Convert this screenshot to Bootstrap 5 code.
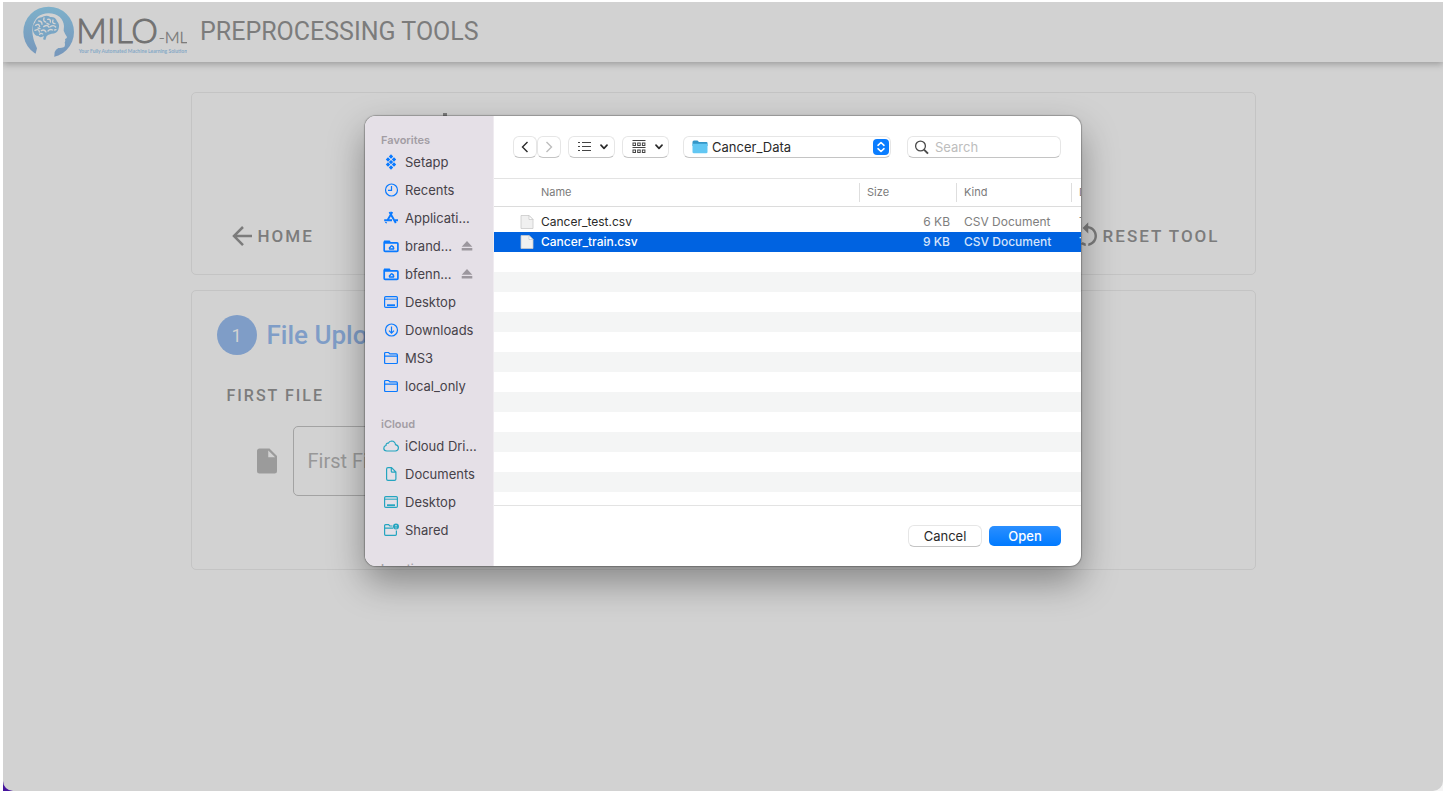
<!DOCTYPE html>
<html lang="en">
<head>
<meta charset="utf-8">
<meta name="viewport" content="width=device-width, initial-scale=1">
<title>MILO-ML Preprocessing Tools</title>
<link href="https://cdn.jsdelivr.net/npm/bootstrap@5.3.0/dist/css/bootstrap.min.css" rel="stylesheet">
<style>
  body { background:#fff; padding:2px 2px 3px 3px; font-family:Roboto,"Liberation Sans",sans-serif; color:#7c7c7c; }
  .desktop-edge { background:linear-gradient(90deg,#45139c 20px,#f4f4f4 20px); }
  .app-window { min-height:calc(100vh - 5px); background:#d2d2d2; border-radius:0 0 10px 10px; }
  .app-bar { height:60px; padding:0 20px; gap:13px; box-shadow:0 2px 7px rgba(0,0,0,.28); }
  .app-bar h1 { font-size:25px; line-height:30px; font-weight:400; }
  .page-col { max-width:1065px; padding-top:30px; gap:15px; }
  .panel { border:1px solid #c4c4c4; border-radius:5px; }
  .panel-actions { min-height:183px; padding:0 35px 23px; }
  .title-tip { width:4px; height:10px; left:251px; top:20px; background:#7c7c7c; }
  .tool-btn { border:0; background:none; padding:0; color:inherit; font-size:17px; line-height:30px; font-weight:500; letter-spacing:2px; gap:1px; }
  .panel-upload { padding:24px 25px 73px; }
  .step-row { gap:10px; }
  .step-dot { width:40px; height:40px; background:#7f9dc7; color:#d2d2d2; font-size:18px; }
  .panel-upload h2 { font-size:26px; line-height:40px; font-weight:500; color:#7f9dc7; }
  .file-label { font-size:16px; line-height:20px; font-weight:500; letter-spacing:2px; margin:31px 0 20px 10px; }
  .file-row { padding-left:35px; gap:11px; color:#9b9b9b; }
  .file-row input { width:320px; height:70px; border:1px solid #a3a3a3; border-radius:5px; background:none; padding:0 14px; font-size:20px; }
  .file-row input::placeholder { color:#989898; }

  .dialog-layer { padding-top:114px; }
  .file-dialog { width:716px; height:450px; border-radius:11px; background:#fff; font-family:Inter,"Liberation Sans",sans-serif; font-size:13px; line-height:16px; color:#2a2a2a;
    box-shadow:0 0 1px 1px rgba(0,0,0,.25),0 16px 36px rgba(0,0,0,.36); }
  .places { width:129px; background:#e5e0e7; border-right:1px solid #efebf0; color:#464249; }
  .places h3 { font-size:11px; line-height:16px; font-weight:600; color:#a29da4; margin:0; padding:16px 0 0 16px; }
  .places a { height:28px; padding:0 16px 0 18px; gap:6px; color:inherit; text-decoration:none; white-space:nowrap; }
  .places svg { flex:none; fill:none; stroke:#0a7aff; stroke-width:1.2; }
  .cloud-set svg { stroke:#25a5c0; }
  .places .eject { stroke:none; fill:#9c979e; }
  .tool-strip { height:63px; padding:0 20px 0 19px; border-bottom:1px solid #e3e3e3; }
  .view-set { gap:7px; }
  .mac-btn { height:22px; border:1px solid #e6e6e6; border-bottom-color:#c4c4c4; border-radius:6px; background:#fff; padding:0; color:#2a2a2a; }
  .nav-btn { width:24px; }
  .view-btn { width:47px; padding-left:3px; gap:9px; }
  .folder-btn { width:208px; padding:0 1px 0 8px; gap:4px; }
  .search-box { width:154px; padding:0 6px; gap:6px; }
  .search-box input { border:0; outline:0; padding:0; background:none; }
  .search-box input::placeholder { color:#bdbdbd; }
  .list-area { height:327px; border-bottom:1px solid #e3e3e3; }
  .file-table { width:800px; table-layout:fixed; border-collapse:separate; border-spacing:0; font-size:12px; }
  .file-table th { height:28px; padding:0 8px 2px; font-size:11px; font-weight:400; color:#7b7b7b; border-bottom:1px solid #dcdcdc;
    background:linear-gradient(#dedede,#dedede) no-repeat 0 4px/1px 19px; }
  .file-table th:first-child { background:none; padding-left:47px; }
  .file-table tbody::before { content:""; display:block; height:5px; }
  .file-table td { height:20px; padding:0 8px; color:#7e7e7e; white-space:nowrap; }
  .file-table td:first-child { color:#2a2a2a; padding-left:25px; }
  .file-table td.text-end { padding-right:6px; }
  .name-cell { gap:6px; }
  .file-table tbody tr:nth-child(even) td { background:#f4f5f5; }
  .file-table tbody tr.picked td { background:#0063e1; color:#d5e4fb; font-weight:500; }
  .file-table tbody tr.picked td:first-child { color:#fff; }
  .dialog-foot { padding:0 20px; gap:7px; }
  .end-btn { width:74px; }
  .open-btn { width:72px; height:20px; border:0; border-radius:5px; background:linear-gradient(#2b8fff,#007aff); color:#fff; font-weight:500; padding:0; }
</style>
</head>
<body>
<svg width="0" height="0" class="position-absolute" aria-hidden="true">
  <symbol id="folder" viewBox="0 0 16 14"><path d="M1.600 11.500v-9q0-1 1-1h3l1.300 1.400h6.500q1 0 1 1v7.600q0 1-1 1H2.600q-1 0-1-1zM1.600 5.200h12.800"/></symbol>
  <symbol id="share-folder" viewBox="0 0 16 14"><path stroke-width="1.700" d="M1.200 2.400V11.500q0 .9.900.9h11.900q.9 0 .9-.9V4.700q0-.9-.9-.9H1.200M1 2.300h5.200l1 1.500"/><path d="M6.700 10q-.9-1.300.6-1.900 1-2.200 2.300-.6 1.200.4.900 1.300.5.700 0 1.200z" stroke-width="1.400"/></symbol>
  <symbol id="desk" viewBox="0 0 16 14"><rect x="1.600" y="1.600" width="12.800" height="10.800" rx="1.200"/><path d="M2 4.200h12" stroke-width="1"/><path d="M4 10.200h8" stroke-width="1.800"/></symbol>
  <symbol id="eject" viewBox="0 0 12 10"><path d="M6 0 11.300 5.800H.7zM.7 7h10.600v2.400H.7z"/></symbol>
  <symbol id="chev" viewBox="0 0 8 6"><path d="M1 1.200 4 4.300 7 1.200" fill="none" stroke="#2a2a2a" stroke-width="1.700" stroke-linecap="round" stroke-linejoin="round"/></symbol>
  <symbol id="page" viewBox="0 0 16 16"><path d="M2 1.500h8l4 4v9H2z" fill="#f0f0f0" stroke="#c9c9c9" stroke-width=".8"/><path d="M10 1.500v4h4z" fill="#fff" stroke="#c4c4c4" stroke-width=".7"/></symbol>
</svg>
<div class="desktop-edge">
<div class="app-window position-relative overflow-hidden">
  <header class="app-bar d-flex align-items-center">
    <svg width="164" height="52" viewBox="24 18 492 156" role="img" aria-label="MILO-ML">
      <defs><linearGradient id="lg" x1="0" y1="0" x2="0" y2="1"><stop offset="0" stop-color="#7db0ca"/><stop offset="1" stop-color="#7696bb"/></linearGradient></defs>
      <circle cx="101" cy="96" r="76" fill="url(#lg)"/>
      <path d="M57 180 66 145Q50 112 52 84C56 54 76 40 100 40 130 40 146 58 147 78L146 92Q150 102 156 111 156 116 150 117 152 123 149 127 152 139 146 142 138 145 130 144 122 148 119 156L117 180z" fill="#d2d2d2"/>
      <path d="M54 93Q50 76 60 68 64 53 80 52 93 43 106 51 122 50 126 64 136 74 130 89 125 101 110 101 99 103 95 108L91 120 84 118 87 108Q76 115 70 108 58 108 54 93z" fill="#7aa6c5"/>
      <g fill="none" stroke="#d2d2d2" stroke-width="4" stroke-linecap="round"><path d="M62 76q10-7 12 4M60 91q12-6 13 5M71 63q10 0 10 10M87 54q-3 10 5 12M98 58q10-2 8 8M114 60q-4 10 6 11M86 80q12-8 16 2M106 80q10-7 16 1M79 92q9-5 14 4M99 93q6-7 14-3M83 102q-6-4-9 1M119 90l4-1M96 70l6 3M69 84l6 2"/></g>
      <text x="184" y="130" font-family="Lato,sans-serif" font-weight="300" font-size="101" fill="#727272" stroke="#727272" stroke-width="3">MILO</text>
      <text x="431" y="130" font-family="Lato,sans-serif" font-weight="300" font-size="49" fill="#757575" stroke="#757575" stroke-width="1">-ML</text>
      <text x="191" y="158" font-family="Lato,sans-serif" font-weight="700" font-size="15" fill="#86a9c6">Your Fully Automated Machine Learning Solution</text>
    </svg>
    <h1 class="mb-0">PREPROCESSING TOOLS</h1>
  </header>

  <main class="page-col mx-auto d-flex flex-column">
    <section class="panel panel-actions position-relative d-flex justify-content-between align-items-end">
      <span class="title-tip position-absolute"></span>
      <button type="button" class="tool-btn d-flex align-items-center"><svg width="30" height="30" viewBox="0 0 24 24" fill="currentColor"><path d="M20 11v2H8l5.500 5.500-1.420 1.420L4.160 12l7.920-7.920L13.500 5.500 8 11h12z"/></svg>HOME</button>
      <button type="button" class="tool-btn d-flex align-items-center"><svg width="30" height="30" viewBox="0 0 24 24" fill="currentColor"><path d="M7.110 8.530 5.700 7.110C4.800 8.270 4.240 9.610 4.070 11h2.020c.14-.87.49-1.720 1.020-2.470zM6.090 13H4.070c.17 1.390.72 2.730 1.620 3.890l1.410-1.420c-.52-.75-.87-1.590-1.010-2.470zm1.010 5.320c1.160.9 2.510 1.440 3.900 1.610V17.900c-.87-.15-1.710-.49-2.460-1.030L7.100 18.320zM13 4.070V1L8.450 5.550 13 10V6.090c2.840.48 5 2.940 5 5.910s-2.160 5.430-5 5.910v2.020c3.950-.49 7-3.850 7-7.930s-3.050-7.440-7-7.930z"/></svg>RESET TOOL</button>
    </section>

    <section class="panel panel-upload">
      <div class="step-row d-flex align-items-center">
        <span class="step-dot rounded-circle d-flex align-items-center justify-content-center">1</span>
        <h2 class="mb-0">File Upload</h2>
      </div>
      <label class="file-label d-block" for="first-file">FIRST FILE</label>
      <div class="file-row d-flex align-items-center">
        <svg width="30" height="30" viewBox="0 0 24 24" fill="currentColor"><path d="M13 9h5.500L13 3.500V9M6 2h8l6 6v12a2 2 0 0 1-2 2H6a2 2 0 0 1-2-2V4c0-1.110.89-2 2-2z"/></svg>
        <input id="first-file" type="text" placeholder="First File">
      </div>
    </section>
  </main>

  <div class="dialog-layer position-absolute top-0 start-0 w-100 d-flex justify-content-center">
    <div class="file-dialog d-flex overflow-hidden" role="dialog" aria-label="Open file">
      <nav class="places flex-shrink-0 overflow-hidden">
        <h3>Favorites</h3>
        <a href="#" class="d-flex align-items-center"><svg width="16" height="16" viewBox="0 0 16 16"><path d="M8 .3 10.200 2.500 8 4.700 5.800 2.500zM5 3.300 7.200 5.500 5 7.700 2.800 5.500zM11 3.300 13.200 5.500 11 7.700 8.800 5.500zM8 5.900 10.200 8 8 10.200 5.800 8zM5 8.300 7.200 10.500 5 12.700 2.800 10.500zM11 8.300 13.200 10.500 11 12.700 8.800 10.500zM8 11.300 10.200 13.500 8 15.700 5.800 13.500z" fill="#0a7aff" stroke="none"/></svg>Setapp</a>
        <a href="#" class="d-flex align-items-center"><svg width="16" height="16" viewBox="0 0 16 16"><circle cx="8.500" cy="8" r="6"/><path d="M8.500 4v4.300H5"/></svg>Recents</a>
        <a href="#" class="d-flex align-items-center"><svg width="16" height="16" viewBox="0 0 16 16"><path d="M6.500 2 12.800 13M9.300 2 4.300 10.500M1.200 10.300H9M12 10.300h3M3.300 12.200 2.800 13.200" stroke-width="1.900"/></svg>Applicati...</a>
        <a href="#" class="d-flex align-items-center"><svg width="16" height="14"><use href="#share-folder"/></svg>brand...<svg class="eject ms-auto me-1" width="12" height="10"><use href="#eject"/></svg></a>
        <a href="#" class="d-flex align-items-center"><svg width="16" height="14"><use href="#share-folder"/></svg>bfenn...<svg class="eject ms-auto me-1" width="12" height="10"><use href="#eject"/></svg></a>
        <a href="#" class="d-flex align-items-center"><svg width="16" height="14"><use href="#desk"/></svg>Desktop</a>
        <a href="#" class="d-flex align-items-center"><svg width="16" height="16" viewBox="0 0 16 16"><circle cx="8.500" cy="8" r="6"/><path d="M8.500 4.500v6.500M6 8.700l2.500 2.500L11 8.700"/></svg>Downloads</a>
        <a href="#" class="d-flex align-items-center"><svg width="16" height="14"><use href="#folder"/></svg>MS3</a>
        <a href="#" class="d-flex align-items-center"><svg width="16" height="14"><use href="#folder"/></svg>local_only</a>
        <div class="cloud-set">
          <h3>iCloud</h3>
          <a href="#" class="d-flex align-items-center"><svg width="16" height="14" viewBox="0 0 16 14"><path d="M3.800 12q-3-.2-3-2.800 0-2.200 2.200-2.700Q3 4 5.300 4.200 6.300 2 8.600 2q3.500.2 3.900 3.700 3 .6 2.900 3.300-.2 2.800-3 3z"/></svg>iCloud Dri...</a>
          <a href="#" class="d-flex align-items-center"><svg width="16" height="16" viewBox="0 0 16 16"><path d="M3.600 13V3q0-1.400 1.400-1.400h3.500l4.400 4.400v7q0 1.400-1.400 1.400H5Q3.600 14.400 3.600 13zM8.300 1.800v3.400q0 1 1 1h3.400"/></svg>Documents</a>
          <a href="#" class="d-flex align-items-center"><svg width="16" height="14"><use href="#desk"/></svg>Desktop</a>
          <a href="#" class="d-flex align-items-center"><svg width="16" height="14" viewBox="0 0 16 14"><path d="M9.500 3H6.800L5.600 1.700h-3q-1 0-1 1v8.600q0 1 1 1h9.800q1 0 1-1V7.500M1.600 5.200H10"/><circle cx="13" cy="3.600" r="3" fill="#25a5c0" stroke="none"/><path d="M12.200 2.800a.8.8 0 1 1 1.600 0 .8.800 0 1 1-1.600 0M11.600 5.200q1.400-1.400 2.800 0z" fill="#e5e0e7" stroke="none"/></svg>Shared</a>
        </div>
        <h3>Locations</h3>
      </nav>

      <div class="flex-grow-1 d-flex flex-column overflow-hidden">
        <div class="tool-strip d-flex align-items-center flex-shrink-0">
          <div class="view-set d-flex align-items-center">
            <div class="d-flex">
              <button type="button" class="mac-btn nav-btn d-flex align-items-center justify-content-center" aria-label="Back"><svg width="8" height="12" viewBox="0 0 8 12" fill="none" stroke="#2a2a2a" stroke-width="1.400"><path d="M6.500 1 1.500 6l5 5"/></svg></button>
              <button type="button" class="mac-btn nav-btn d-flex align-items-center justify-content-center" aria-label="Forward"><svg width="8" height="12" viewBox="0 0 8 12" fill="none" stroke="#bdbdbd" stroke-width="1.400"><path d="M1.500 1l5 5-5 5"/></svg></button>
            </div>
            <button type="button" class="mac-btn view-btn d-flex align-items-center justify-content-center" aria-label="List view"><svg width="13" height="12" viewBox="0 0 13 12" fill="none" stroke="#444" stroke-width="1"><path d="M0 1.500h2M0 5.500h2M0 9.500h2M4 1.500h9M4 5.500h9M4 9.500h9"/></svg><svg width="8" height="6"><use href="#chev"/></svg></button>
            <button type="button" class="mac-btn view-btn d-flex align-items-center justify-content-center" aria-label="Group by"><svg width="14" height="14" viewBox="0 0 14 14" fill="none" stroke="#444" stroke-width="1"><path d="M.5 .5h13M.5 7.500h13"/><rect x="1" y="3" width="2.500" height="2.500"/><rect x="5.700" y="3" width="2.500" height="2.500"/><rect x="10.400" y="3" width="2.500" height="2.500"/><rect x="1" y="10" width="2.500" height="2.500"/><rect x="5.700" y="10" width="2.500" height="2.500"/><rect x="10.400" y="10" width="2.500" height="2.500"/></svg><svg width="8" height="6"><use href="#chev"/></svg></button>
          </div>
          <button type="button" class="mac-btn folder-btn d-flex align-items-center ms-auto"><svg width="16" height="14" viewBox="0 0 16 14"><path d="M.5 2q0-1.500 1.500-1.500h3.500L7 2h7.500q1 0 1 1v3H.5z" fill="#3496c7"/><path d="M.5 3.700h15V12q0 1.300-1.300 1.300H1.800Q.5 13.300.5 12z" fill="#62c7f3"/></svg>Cancer_Data
            <svg class="ms-auto" width="16" height="16" viewBox="0 0 16 16"><rect width="16" height="16" rx="4" fill="#0a7dff"/><path d="M5 6.300 8 3.500l3 2.800M5 9.700l3 2.800 3-2.800" fill="none" stroke="#fff" stroke-width="1.600" stroke-linecap="round" stroke-linejoin="round"/></svg></button>
          <div class="mac-btn search-box d-flex align-items-center ms-3">
            <svg class="flex-shrink-0" width="15" height="15" viewBox="0 0 15 15" fill="none" stroke="#4a4a4a"><circle cx="6.500" cy="6" r="4.900" stroke-width="1.300"/><path d="M10 9.700l4 4" stroke-width="1.900"/></svg>
            <input type="text" class="w-100" placeholder="Search" aria-label="Search">
          </div>
        </div>

        <div class="list-area overflow-hidden flex-shrink-0">
          <table class="file-table">
            <colgroup><col style="width:365px"><col style="width:97px"><col style="width:115px"><col></colgroup>
            <thead><tr><th>Name</th><th>Size</th><th>Kind</th><th>Date</th></tr></thead>
            <tbody>
              <tr><td><div class="name-cell d-flex align-items-center"><svg width="16" height="16"><use href="#page"/></svg><span>Cancer_test.csv</span></div></td><td class="text-end">6 KB</td><td>CSV Document</td><td>Today</td></tr>
              <tr class="picked"><td><div class="name-cell d-flex align-items-center"><svg width="16" height="16"><use href="#page"/></svg><span>Cancer_train.csv</span></div></td><td class="text-end">9 KB</td><td>CSV Document</td><td>Today</td></tr>
              <tr><td colspan="4"></td></tr><tr><td colspan="4"></td></tr>
              <tr><td colspan="4"></td></tr><tr><td colspan="4"></td></tr>
              <tr><td colspan="4"></td></tr><tr><td colspan="4"></td></tr>
              <tr><td colspan="4"></td></tr><tr><td colspan="4"></td></tr>
              <tr><td colspan="4"></td></tr><tr><td colspan="4"></td></tr>
              <tr><td colspan="4"></td></tr><tr><td colspan="4"></td></tr>
            </tbody>
          </table>
        </div>

        <div class="dialog-foot flex-grow-1 d-flex align-items-center justify-content-end">
          <button type="button" class="mac-btn end-btn">Cancel</button>
          <button type="button" class="open-btn">Open</button>
        </div>
      </div>
    </div>
  </div>
</div>
</div>
<script src="https://cdn.jsdelivr.net/npm/bootstrap@5.3.0/dist/js/bootstrap.bundle.min.js"></script>
</body>
</html>
